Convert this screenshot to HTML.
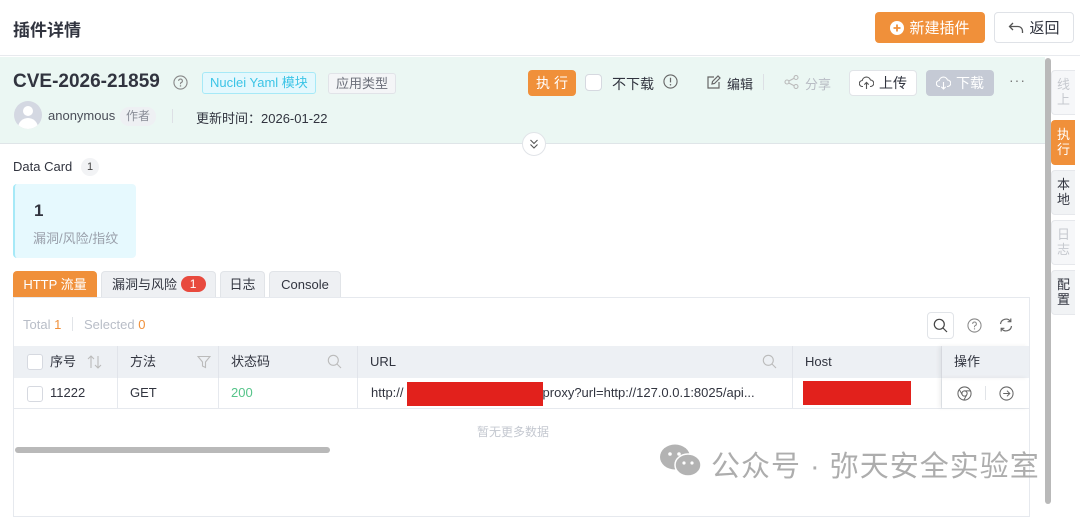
<!DOCTYPE html>
<html><head><meta charset="utf-8"><style>
*{box-sizing:border-box;margin:0;padding:0}
body{width:1080px;height:504px;overflow:hidden;background:#fff;font-family:"Liberation Sans","Noto Sans CJK SC",sans-serif;color:#31343f;position:relative}
.a{position:absolute}
.btn{position:absolute;border-radius:4px;font-size:14px;display:flex;align-items:center;justify-content:center;gap:5px}
.th{position:absolute;top:346px;height:32px;font-size:13px;line-height:32px;padding-left:12px;border-right:1px solid #e1e4ea}
.td{position:absolute;top:378px;height:30px;font-size:13px;line-height:30px;padding-left:12px;border-right:1px solid #e6e9ee}
.rt{position:absolute;left:1051px;width:24px;border:1px solid #e6e8ec;border-right:none;border-radius:4px 0 0 4px;background:#f1f3f5;font-size:13px;line-height:15px;text-align:center;padding-top:6px;color:#31343f}
.cb{position:absolute;width:16px;height:16px;border:1px solid #d6d9e0;border-radius:3px;background:#fff}
</style></head><body>
<div class="a" style="left:13px;top:16px;font-size:17px;font-weight:bold;color:#31343f">插件详情</div>
<div class="btn" style="left:875px;top:12px;width:110px;height:31px;background:#f0903a;color:#fff;font-size:15px"><svg width="14" height="14" viewBox="0 0 14 14"><circle cx="7" cy="7" r="7" fill="#fff"/><path d="M7 3.5v7M3.5 7h7" stroke="#f0903a" stroke-width="1.8"/></svg>新建插件</div>
<div class="btn" style="left:994px;top:12px;width:80px;height:31px;border:1px solid #dfe2e7;color:#31343f;font-size:15px"><svg width="16" height="14" viewBox="0 0 16 14"><path d="M5 2L1.5 5.5 5 9M1.5 5.5H10a4.5 4.5 0 0 1 4.5 4.5v2" fill="none" stroke="#555" stroke-width="1.3"/></svg>返回</div>
<div class="a" style="left:0;top:55px;width:1080px;height:1px;background:#e8eaee"></div>
<div class="a" style="left:0;top:57px;width:1045px;height:87px;background:#ebf7f3;border-bottom:1px solid #dfe5e8"></div>
<div class="a" style="left:13px;top:71px;font-size:19px;font-weight:bold;color:#31343f">CVE-2026-21859</div>
<svg class="a" style="left:173px;top:75px" width="15" height="15" viewBox="0 0 16 16"><circle cx="8" cy="8" r="7" fill="none" stroke="#888" stroke-width="1.2"/><path d="M6 6.3a2 2 0 1 1 2.6 1.9c-.5.2-.6.5-.6 1v.6" fill="none" stroke="#888" stroke-width="1.2"/><circle cx="8" cy="11.6" r=".8" fill="#888"/></svg>
<div class="a" style="left:202px;top:72px;height:22px;padding:0 7px;border:1px solid #a6e9f7;background:#e4f8fd;color:#3cc4e6;font-size:13px;line-height:20px;border-radius:3px">Nuclei Yaml 模块</div>
<div class="a" style="left:328px;top:73px;height:21px;padding:0 7px;border:1px solid #e1e3e8;background:#f4f5f7;color:#6b6f7a;font-size:13px;line-height:19px;border-radius:3px">应用类型</div>
<div class="a" style="left:14px;top:101px;width:28px;height:28px;border-radius:50%;background:#d4d8e2;overflow:hidden"><div class="a" style="left:9px;top:5px;width:10px;height:10px;border-radius:50%;background:#fff"></div><div class="a" style="left:4px;top:17px;width:20px;height:14px;border-radius:10px 10px 0 0;background:#fff"></div></div>
<div class="a" style="left:48px;top:108px;font-size:13px;color:#4a4e58">anonymous</div>
<div class="a" style="left:120px;top:107px;height:19px;padding:0 6px;background:#eef0f3;border-radius:9px;font-size:12px;line-height:19px;color:#888c96">作者</div>
<div class="a" style="left:172px;top:109px;width:1px;height:14px;background:#dde0e5"></div>
<div class="a" style="left:196px;top:108px;font-size:13px;color:#31343f">更新时间：2026-01-22</div>
<div class="btn" style="left:528px;top:70px;width:48px;height:26px;background:#f0903a;color:#fff;letter-spacing:4px;padding-left:4px">执行</div>
<div class="cb" style="left:585px;top:74px;width:17px;height:17px;border-radius:4px"></div>
<div class="a" style="left:612px;top:74px;font-size:14px;color:#31343f">不下载</div>
<svg class="a" style="left:663px;top:74px" width="15" height="15" viewBox="0 0 16 16"><circle cx="8" cy="8" r="7" fill="none" stroke="#666" stroke-width="1.2"/><path d="M8 4v5" stroke="#666" stroke-width="1.3"/><circle cx="8" cy="11.5" r=".8" fill="#666"/></svg>
<svg class="a" style="left:707px;top:75px" width="14" height="14" viewBox="0 0 14 14"><path d="M12 7v6H1V2h6" fill="none" stroke="#666" stroke-width="1.2"/><path d="M5 9l.5-2.5L11 1l2 2-5.5 5.5z" fill="none" stroke="#666" stroke-width="1.2"/></svg>
<div class="a" style="left:727px;top:74px;font-size:13px;color:#31343f">编辑</div>
<div class="a" style="left:763px;top:74px;width:1px;height:16px;background:#dde0e5"></div>
<svg class="a" style="left:784px;top:75px" width="15" height="14" viewBox="0 0 15 14"><circle cx="3" cy="7" r="2" fill="none" stroke="#bbb" stroke-width="1.1"/><circle cx="12" cy="2.5" r="2" fill="none" stroke="#bbb" stroke-width="1.1"/><circle cx="12" cy="11.5" r="2" fill="none" stroke="#bbb" stroke-width="1.1"/><path d="M4.8 6l5.4-2.7M4.8 8l5.4 2.7" stroke="#bbb" stroke-width="1.1"/></svg>
<div class="a" style="left:805px;top:74px;font-size:13px;color:#b8bcc4">分享</div>
<div class="btn" style="left:849px;top:70px;width:68px;height:26px;background:#fff;border:1px solid #e1e4e8;color:#31343f"><svg width="15" height="14" viewBox="0 0 15 14"><path d="M4 10.5H3.5a3 3 0 0 1-.3-6A4.3 4.3 0 0 1 11.5 4a3.2 3.2 0 0 1 0 6.5H11" fill="none" stroke="#555" stroke-width="1.1"/><path d="M7.5 13V6.5M5.3 8.6l2.2-2.2 2.2 2.2" fill="none" stroke="#555" stroke-width="1.1"/></svg>上传</div>
<div class="btn" style="left:926px;top:70px;width:68px;height:26px;background:#c5cad5;color:#fff"><svg width="15" height="14" viewBox="0 0 15 14"><path d="M4 10.5H3.5a3 3 0 0 1-.3-6A4.3 4.3 0 0 1 11.5 4a3.2 3.2 0 0 1 0 6.5H11" fill="none" stroke="#fff" stroke-width="1.1"/><path d="M7.5 6v7M5.3 10.8l2.2 2.2 2.2-2.2" fill="none" stroke="#fff" stroke-width="1.1"/></svg>下载</div>
<div class="a" style="left:1009px;top:72px;font-size:14px;color:#777;letter-spacing:1px">···</div>
<div class="a" style="left:522px;top:132px;width:24px;height:24px;border-radius:50%;background:#fff;border:1px solid #e1e4e8"></div>
<svg class="a" style="left:529px;top:138px" width="10" height="12" viewBox="0 0 10 12"><path d="M1.5 2l3.5 3.5L8.5 2M1.5 6.5L5 10l3.5-3.5" fill="none" stroke="#555" stroke-width="1.1"/></svg>
<div class="a" style="left:1045px;top:58px;width:6px;height:446px;background:#b9b9b9;border-radius:3px"></div>
<div class="rt" style="top:70px;height:45px;background:#f6f7f9;color:#c6c9cf">线<br>上</div>
<div class="rt" style="top:120px;height:45px;background:#f0903a;color:#fff;border-color:#f0903a">执<br>行</div>
<div class="rt" style="top:170px;height:45px">本<br>地</div>
<div class="rt" style="top:220px;height:45px;background:#f6f7f9;color:#c6c9cf">日<br>志</div>
<div class="rt" style="top:270px;height:45px">配<br>置</div>
<div class="a" style="left:13px;top:159px;font-size:13px;color:#31343f">Data Card</div>
<div class="a" style="left:81px;top:158px;width:18px;height:18px;border-radius:9px;background:#f2f3f5;font-size:11px;line-height:18px;text-align:center;color:#444">1</div>
<div class="a" style="left:13px;top:184px;width:123px;height:74px;background:#e6f9fe;border-left:2px solid #a6e9f7;border-radius:4px"></div>
<div class="a" style="left:34px;top:201px;font-size:17px;font-weight:bold;color:#31343f">1</div>
<div class="a" style="left:33px;top:228px;font-size:13px;color:#9aa0ab">漏洞/风险/指纹</div>
<div class="a" style="left:13px;top:271px;width:84px;height:27px;background:#f0903a;color:#fff;border-radius:4px 4px 0 0;font-size:13px;line-height:27px;text-align:center">HTTP 流量</div>
<div class="a" style="left:101px;top:271px;width:115px;height:27px;background:#eef0f3;border:1px solid #e1e4e8;border-bottom:none;border-radius:4px 4px 0 0;font-size:13px;line-height:26px;padding-left:10px">漏洞与风险 <span style="display:inline-block;width:25px;height:16px;border-radius:8px;background:#e84a3e;color:#fff;text-align:center;line-height:16px;font-size:12px;vertical-align:1px">1</span></div>
<div class="a" style="left:220px;top:271px;width:45px;height:27px;background:#eef0f3;border:1px solid #e1e4e8;border-bottom:none;border-radius:4px 4px 0 0;font-size:13px;line-height:26px;text-align:center">日志</div>
<div class="a" style="left:269px;top:271px;width:72px;height:27px;background:#eef0f3;border:1px solid #e1e4e8;border-bottom:none;border-radius:4px 4px 0 0;font-size:13px;line-height:26px;text-align:center">Console</div>
<div class="a" style="left:13px;top:297px;width:1017px;height:220px;border:1px solid #e6e9ee"></div>
<div class="a" style="left:23px;top:317px;font-size:13px;color:#b8bdc7">Total <span style="color:#f0903a">1</span></div>
<div class="a" style="left:72px;top:317px;width:1px;height:14px;background:#e1e4e8"></div>
<div class="a" style="left:84px;top:317px;font-size:13px;color:#b8bdc7">Selected <span style="color:#f0903a">0</span></div>
<div class="a" style="left:927px;top:312px;width:27px;height:27px;border:1px solid #e1e4e8;border-radius:4px"></div>
<svg class="a" style="left:933px;top:318px" width="15" height="15" viewBox="0 0 15 15"><circle cx="6.3" cy="6.3" r="5" fill="none" stroke="#444" stroke-width="1.2"/><path d="M10 10l4 4" stroke="#444" stroke-width="1.2"/></svg>
<svg class="a" style="left:967px;top:318px" width="15" height="15" viewBox="0 0 16 16"><circle cx="8" cy="8" r="7" fill="none" stroke="#888" stroke-width="1.1"/><path d="M6 6.3a2 2 0 1 1 2.6 1.9c-.5.2-.6.5-.6 1v.6" fill="none" stroke="#888" stroke-width="1.1"/><circle cx="8" cy="11.6" r=".7" fill="#888"/></svg>
<svg class="a" style="left:998px;top:317px" width="16" height="16" viewBox="0 0 16 16"><path d="M2.5 7a5.5 5.5 0 0 1 10-2.5M13.5 9a5.5 5.5 0 0 1-10 2.5" fill="none" stroke="#666" stroke-width="1.2"/><path d="M12.8 1.5v3.2H9.6M3.2 14.5v-3.2h3.2" fill="none" stroke="#666" stroke-width="1.2"/></svg>
<div class="a" style="left:14px;top:346px;width:1015px;height:32px;background:#edf0f4"></div>
<div class="th" style="left:14px;width:104px;padding-left:36px">序号</div>
<div class="cb" style="left:27px;top:354px"></div>
<svg class="a" style="left:86px;top:355px" width="18" height="14" viewBox="0 0 18 14"><path d="M5 13V1M2 4l3-3 3 3M12 1v12M9 10l3 3 3-3" fill="none" stroke="#bbb" stroke-width="1.1"/></svg>
<div class="th" style="left:118px;width:101px">方法</div>
<svg class="a" style="left:197px;top:355px" width="14" height="14" viewBox="0 0 14 14"><path d="M1 1.5h12L8.5 7v5.5l-3-1.5V7z" fill="none" stroke="#bbb" stroke-width="1.1"/></svg>
<div class="th" style="left:219px;width:139px">状态码</div>
<svg class="a" style="left:327px;top:354px" width="15" height="15" viewBox="0 0 15 15"><circle cx="6.3" cy="6.3" r="5" fill="none" stroke="#bbb" stroke-width="1.1"/><path d="M10 10l4 4" stroke="#bbb" stroke-width="1.1"/></svg>
<div class="th" style="left:358px;width:435px">URL</div>
<svg class="a" style="left:762px;top:354px" width="15" height="15" viewBox="0 0 15 15"><circle cx="6.3" cy="6.3" r="5" fill="none" stroke="#bbb" stroke-width="1.1"/><path d="M10 10l4 4" stroke="#bbb" stroke-width="1.1"/></svg>
<div class="th" style="left:793px;width:149px">Host</div>
<div class="th" style="left:942px;width:87px;border-right:none;box-shadow:-3px 0 4px rgba(0,0,0,.06)">操作</div>
<div class="a" style="left:14px;top:408px;width:1015px;height:1px;background:#e6e9ee"></div>
<div class="td" style="left:14px;width:104px;padding-left:36px">11222</div>
<div class="cb" style="left:27px;top:386px"></div>
<div class="td" style="left:118px;width:101px">GET</div>
<div class="td" style="left:219px;width:139px;color:#56c48a">200</div>
<div class="td" style="left:358px;width:435px;padding-left:13px">http://<span style="display:inline-block;width:136px;height:24px;background:#e2211c;vertical-align:middle;margin-left:3px"></span>proxy?url=http://127.0.0.1:8025/api...</div>
<div class="td" style="left:793px;width:149px"></div>
<div class="a" style="left:803px;top:381px;width:108px;height:24px;background:#e2211c"></div>
<div class="td" style="left:942px;width:87px;border-right:none;box-shadow:-3px 0 4px rgba(0,0,0,.06)"></div>
<svg class="a" style="left:957px;top:386px" width="15" height="15" viewBox="0 0 16 16"><circle cx="8" cy="8" r="7" fill="none" stroke="#666" stroke-width="1.1"/><circle cx="8" cy="8" r="2.8" fill="none" stroke="#666" stroke-width="1.1"/><path d="M8 5.2h6M5.6 9.4L2.6 4M10.4 9.4l-3 5.4" stroke="#666" stroke-width="1"/></svg>
<div class="a" style="left:985px;top:386px;width:1px;height:14px;background:#e1e4e8"></div>
<svg class="a" style="left:999px;top:386px" width="15" height="15" viewBox="0 0 16 16"><circle cx="8" cy="8" r="7" fill="none" stroke="#666" stroke-width="1.1"/><path d="M4.5 8h7M8.5 5l3 3-3 3" fill="none" stroke="#666" stroke-width="1.1"/></svg>
<div class="a" style="left:477px;top:423px;font-size:12px;color:#c4c8d0">暂无更多数据</div>
<div class="a" style="left:15px;top:447px;width:315px;height:6px;border-radius:3px;background:#b9b9b9"></div>
<svg class="a" style="left:658px;top:443px" width="46" height="36" viewBox="0 0 46 36"><ellipse cx="17" cy="14" rx="15" ry="12.5" fill="#b3b3b3"/><ellipse cx="30" cy="22" rx="13" ry="11" fill="#b3b3b3" stroke="#fff" stroke-width="1.5"/><circle cx="12" cy="11" r="1.8" fill="#fff"/><circle cx="21" cy="11" r="1.8" fill="#fff"/><circle cx="26" cy="20" r="1.6" fill="#fff"/><circle cx="34" cy="20" r="1.6" fill="#fff"/></svg>
<div class="a" style="left:711px;top:443px;font-size:29px;color:#adadad;letter-spacing:1px;white-space:nowrap">公众号 · 弥天安全实验室</div>
</body></html>
